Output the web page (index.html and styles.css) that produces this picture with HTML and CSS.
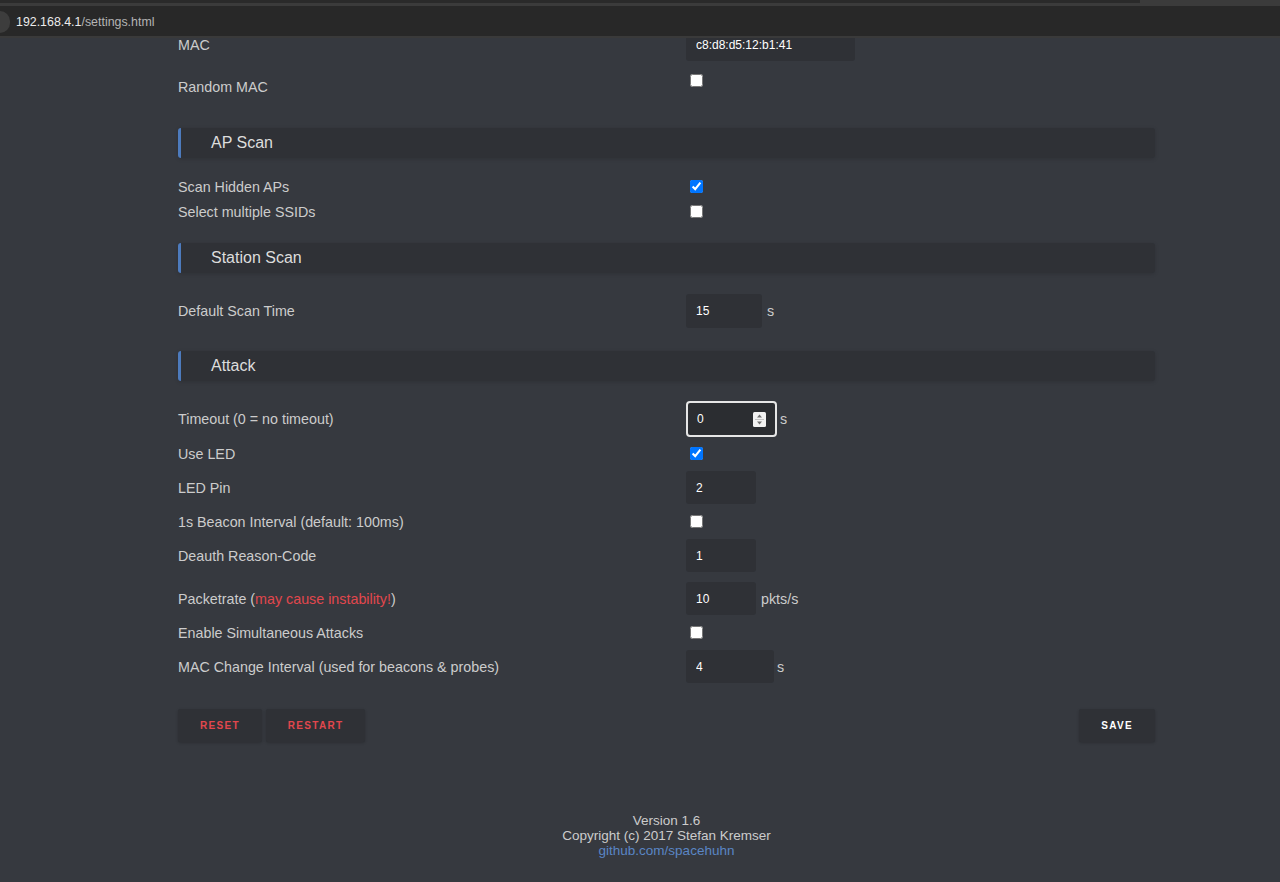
FILE: index.html
```html
<!DOCTYPE html>
<html lang="en">
<head>
    <meta charset="UTF-8">
    <meta name="viewport" content="width=device-width, initial-scale=1.0">
    <title>Settings</title>
    <link rel="stylesheet" href="styles.css">
</head>
<body>
    <div class="browser-bar">
        <div class="tabs"><div class="tabs-edge"></div></div>
        <div class="omnibox">
            <span class="site-info"></span>
            <span class="url"><span class="host">192.168.4.1</span>/settings.html</span>
        </div>
    </div>

    <main class="viewport">
        <div class="container">
            <div class="section">
                <div class="row field">
                    <label>MAC</label>
                    <div class="control"><input type="text" class="text-input wide" value="c8:d8:d5:12:b1:41"></div>
                </div>
                <div class="row field top">
                    <label class="top-label">Random MAC</label>
                    <div class="control"><input type="checkbox" class="top-check"></div>
                </div>
            </div>

            <h2 class="section-title">AP Scan</h2>
            <div class="section">
                <div class="row">
                    <label>Scan Hidden APs</label>
                    <div class="control"><input type="checkbox" checked></div>
                </div>
                <div class="row">
                    <label>Select multiple SSIDs</label>
                    <div class="control"><input type="checkbox"></div>
                </div>
            </div>

            <h2 class="section-title">Station Scan</h2>
            <div class="section">
                <div class="row field">
                    <label>Default Scan Time</label>
                    <div class="control">
                        <input type="text" class="text-input scan" value="15">
                        <span class="unit">s</span>
                    </div>
                </div>
            </div>

            <h2 class="section-title">Attack</h2>
            <div class="section">
                <div class="row focus">
                    <label>Timeout (0 = no timeout)</label>
                    <div class="control">
                        <div class="num-field">
                            <input type="text" value="0">
                            <svg class="spinner" width="13" height="15" viewBox="0 0 13 15">
                                <rect x="0" y="0" width="13" height="15" rx="1.5" fill="#f2f2f2"/>
                                <line x1="2" y1="7.5" x2="11" y2="7.5" stroke="#c4c4c4" stroke-width="1"/>
                                <path d="M4 5.5 L6.5 2.5 L9 5.5 Z" fill="#707070"/>
                                <path d="M4 9.5 L6.5 12.5 L9 9.5 Z" fill="#707070"/>
                            </svg>
                        </div>
                        <span class="unit near">s</span>
                    </div>
                </div>
                <div class="row">
                    <label>Use LED</label>
                    <div class="control"><input type="checkbox" checked></div>
                </div>
                <div class="row field">
                    <label>LED Pin</label>
                    <div class="control"><input type="text" class="text-input" value="2"></div>
                </div>
                <div class="row">
                    <label>1s Beacon Interval (default: 100ms)</label>
                    <div class="control"><input type="checkbox"></div>
                </div>
                <div class="row field">
                    <label>Deauth Reason-Code</label>
                    <div class="control"><input type="text" class="text-input" value="1"></div>
                </div>
                <div class="row field">
                    <label>Packetrate (<span class="warn">may cause instability!</span>)</label>
                    <div class="control">
                        <input type="text" class="text-input" value="10">
                        <span class="unit">pkts/s</span>
                    </div>
                </div>
                <div class="row">
                    <label>Enable Simultaneous Attacks</label>
                    <div class="control"><input type="checkbox"></div>
                </div>
                <div class="row field">
                    <label>MAC Change Interval (used for beacons &amp; probes)</label>
                    <div class="control">
                        <input type="text" class="text-input interval" value="4">
                        <span class="unit near">s</span>
                    </div>
                </div>
            </div>

            <div class="actions">
                <div class="btn-group">
                    <button class="btn danger">Reset</button>
                    <button class="btn danger">Restart</button>
                </div>
                <button class="btn">Save</button>
            </div>

            <footer class="footer">
                Version 1.6<br>
                Copyright (c) 2017 Stefan Kremser<br>
                <a href="#">github.com/spacehuhn</a>
            </footer>
        </div>
    </main>
</body>
</html>
```

FILE: styles.css
```css
body {
    margin: 0;
    background-color: #36393f;
    font-family: "Liberation Sans", Arial, sans-serif;
    color: #cccccc;
    overflow: hidden;
}

/* browser chrome on top of the page */
.browser-bar {
    height: 38px;
    background-color: #282828;
}

.tabs {
    height: 6px;
    background-color: #3b3b3b;
}

.tabs-edge {
    width: 1140px;
    height: 3px;
    background-color: #2a2a2a;
}

.omnibox {
    display: flex;
    align-items: center;
    height: 32px;
    box-sizing: border-box;
    padding-top: 2px;
    border-bottom: 2px solid #3a3a3a;
}

.site-info {
    width: 10px;
    height: 22px;
    margin-right: 6px;
    background-color: #3d3d3d;
    border-radius: 0 11px 11px 0;
}

.url {
    font-size: 12.4px;
    color: #b4b4b4;
}

.url .host {
    color: #ececec;
}

/* page */
.viewport {
    height: 844px;
    overflow: hidden;
}

.container {
    width: 977px;
    margin: -31px 0 0 178px;
}

.section {
    display: flex;
    flex-direction: column;
    padding: 16px 0 19px;
}

.section-title {
    margin: 0;
    height: 30px;
    line-height: 30px;
    padding-left: 30px;
    background-color: #2f3136;
    border-left: 3px solid #4d7bbd;
    border-radius: 3px;
    box-shadow: 0 1px 4px rgba(0, 0, 0, 0.15);
    font-size: 16px;
    font-weight: normal;
    color: #dddddd;
}

.row {
    display: grid;
    grid-template-columns: 508px 1fr;
    align-items: center;
    height: 25px;
    font-size: 14.3px;
}

.row.field {
    height: 33px;
    margin: 5px 0;
}

.row.focus {
    height: 36px;
    margin: 4px 0;
}

.row.top {
    align-items: start;
}

.top-label {
    padding-top: 8px;
    line-height: 16px;
}

.control {
    display: flex;
    align-items: center;
    gap: 5px;
    height: 100%;
}

.row.top .control {
    align-items: flex-start;
}

input[type="checkbox"] {
    margin: 3px 3px 3px 4px;
}

.top-check {
    margin-top: 0;
}

.text-input {
    width: 70px;
    height: 33px;
    box-sizing: border-box;
    padding: 0 10px;
    border: none;
    border-radius: 3px;
    background-color: #2f3136;
    color: #ffffff;
    font: 12px "Liberation Sans", Arial, sans-serif;
}

.text-input.wide {
    width: 169px;
}

.text-input.scan {
    width: 76px;
    height: 34px;
}

.text-input.interval {
    width: 88px;
}

.num-field {
    display: flex;
    align-items: center;
    width: 91px;
    height: 36px;
    box-sizing: border-box;
    padding-right: 9px;
    border: 2px solid #e6e6e6;
    border-radius: 4px;
    background-color: #2b2d31;
}

.num-field input {
    flex: 1;
    min-width: 0;
    height: 100%;
    padding: 0 0 0 9px;
    border: none;
    background: transparent;
    color: #ffffff;
    font: 12px "Liberation Sans", Arial, sans-serif;
}

.unit {
    font-size: 14.3px;
}

.unit.near {
    margin-left: -2px;
}

.warn {
    color: #e2474d;
}

.actions {
    display: flex;
    justify-content: space-between;
    margin-top: 2px;
}

.btn-group {
    display: flex;
    gap: 4px;
}

.btn {
    height: 33px;
    padding: 0 22px;
    border: none;
    border-radius: 2px;
    background-color: #2f3136;
    box-shadow: 0 1px 3px rgba(0, 0, 0, 0.2);
    color: #ffffff;
    font: bold 10px "Liberation Sans", Arial, sans-serif;
    letter-spacing: 1.3px;
    text-transform: uppercase;
    cursor: pointer;
}

.btn.danger {
    color: #e2474d;
}

.footer {
    padding-top: 71px;
    text-align: center;
    font-size: 13.5px;
    line-height: 15px;
    color: #cccccc;
}

.footer a {
    color: #5a86c5;
    text-decoration: none;
}
```
